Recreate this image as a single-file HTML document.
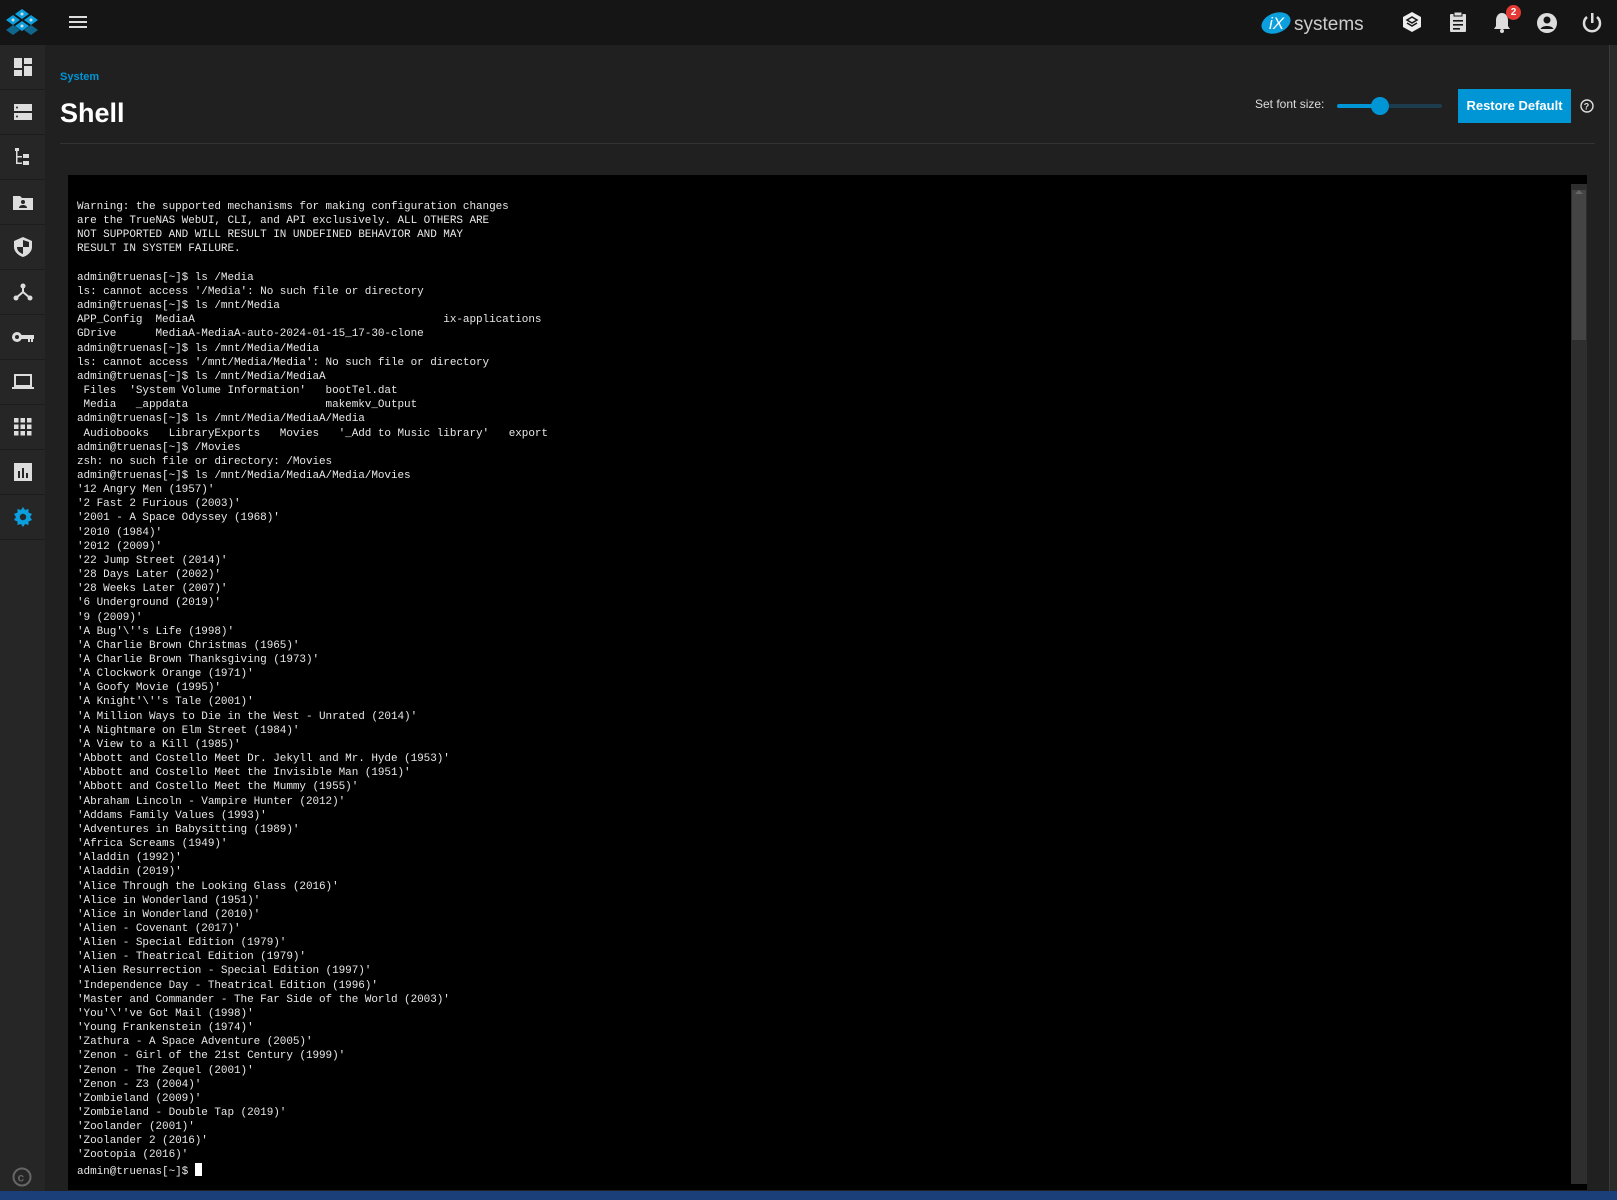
<!DOCTYPE html>
<html><head><meta charset="utf-8"><style>
*{margin:0;padding:0;box-sizing:border-box}
body{width:1617px;height:1200px;overflow:hidden;background:#202020;font-family:"Liberation Sans",sans-serif;position:relative}
.top{position:absolute;left:0;top:0;width:1617px;height:45px;background:#151515}
.side{position:absolute;left:0;top:45px;width:45px;height:1155px;background:#262626}
.side .it{height:45px;border-bottom:1px solid #1c1c1c;display:flex;align-items:center;justify-content:center}
.crumb{position:absolute;left:60px;top:71px;color:#0095d5;font-size:11px;font-weight:bold}
.title{position:absolute;left:60px;top:98px;color:#fff;font-size:27px;font-weight:bold}
.hr{position:absolute;left:60px;top:143px;width:1535px;height:1px;background:#333}
.term{position:absolute;left:68px;top:175px;width:1519px;height:1015px;background:#000}
pre{position:absolute;left:77px;top:200px;font-family:"Liberation Mono",monospace;font-size:11px;letter-spacing:-0.06px;line-height:14.16px;color:#e8e8e8}
.cur{display:inline-block;width:7px;height:13px;background:#fff;vertical-align:-2px}
.sb{position:absolute;left:1571px;top:184px;width:16px;height:1000px;background:#2e2e2e}
.thumb{position:absolute;left:1572px;top:190px;width:14px;height:150px;background:#444}
.psb{position:absolute;left:1609px;top:45px;width:8px;height:1147px;background:#2a2a2a;border-left:1px solid #3a3a3a}
.bottom{position:absolute;left:0;top:1191px;width:1617px;height:9px;background:#1b3f78}
.btn{position:absolute;left:1458px;top:89px;width:113px;height:34px;background:#0095d5;color:#fff;font-weight:bold;font-size:13px;text-align:center;line-height:34px}
</style></head><body>
<div class="top"></div>
<svg style="position:absolute;left:3px;top:8px" width="38" height="28" viewBox="0 0 38 28"><g fill="#0b9fde"><polygon points="19,1 26,6 19,11 12,6"/><polygon points="10,7 17,12 10,17 3,12"/><polygon points="28,7 35,12 28,17 21,12"/><polygon points="19,13 26,18 19,23 12,18"/><polygon points="10,17 17,22 10,27 3,22" opacity=".6"/><polygon points="28,17 35,22 28,27 21,22" opacity=".6"/></g><g fill="#ddd"><circle cx="19" cy="6" r="1.5"/><circle cx="10" cy="12" r="1.5"/><circle cx="28" cy="12" r="1.5"/><circle cx="19" cy="18" r="1.5"/></g></svg>
<svg style="position:absolute;left:69px;top:15px" width="20" height="14"><rect y="1" width="18" height="2" fill="#ddd"/><rect y="6" width="18" height="2" fill="#ddd"/><rect y="11" width="18" height="2" fill="#ddd"/></svg>
<svg style="position:absolute;left:1260px;top:8px" width="110" height="30"><ellipse cx="16" cy="15" rx="15" ry="10" fill="#0b9fde" transform="rotate(-20 16 15)"/><text x="9" y="21" fill="#fff" font-size="17" font-family="Liberation Sans" font-style="italic">iX</text><text x="34" y="22" fill="#ccc" font-size="19" font-family="Liberation Sans">systems</text></svg>
<svg style="position:absolute;left:1401px;top:11px" width="22" height="22" viewBox="0 0 22 22"><path d="M11 1 L20 6 L20 16 L11 21 L2 16 L2 6Z" fill="#eee"/><path d="M6 9 L11 6 L16 9 L11 12Z M6 12 L11 15 L16 12" fill="none" stroke="#151515" stroke-width="1.5"/></svg>
<svg style="position:absolute;left:1448px;top:11px" width="20" height="22"><rect x="2" y="3" width="16" height="18" rx="1" fill="#ddd"/><rect x="6" y="1" width="8" height="4" fill="#ddd" stroke="#151515"/><rect x="5" y="9" width="10" height="1.6" fill="#151515"/><rect x="5" y="13" width="10" height="1.6" fill="#151515"/><rect x="5" y="17" width="7" height="1.6" fill="#151515"/></svg>
<svg style="position:absolute;left:1492px;top:12px" width="20" height="22"><path d="M10 1 C6 1 4 5 4 8 L4 14 L2 17 L18 17 L16 14 L16 8 C16 5 14 1 10 1Z" fill="#ddd"/><circle cx="10" cy="19" r="2" fill="#ddd"/></svg>
<div style="position:absolute;left:1506px;top:5px;width:15px;height:15px;border-radius:50%;background:#e53935;color:#fff;font-size:10px;font-weight:bold;text-align:center;line-height:15px">2</div>
<svg style="position:absolute;left:1536px;top:12px" width="22" height="22"><circle cx="11" cy="11" r="10" fill="#ddd"/><circle cx="11" cy="8" r="3.5" fill="#151515"/><path d="M4.5 17 C6 13 16 13 17.5 17" fill="#151515"/></svg>
<svg style="position:absolute;left:1581px;top:12px" width="22" height="22"><path d="M6 5 A8 8 0 1 0 16 5" fill="none" stroke="#ddd" stroke-width="2.5"/><rect x="10" y="1" width="2.5" height="10" fill="#ddd"/></svg>
<div class="side">
<div class="it"><svg width="18" height="18"><rect x="0" y="0" width="8" height="10" fill="#ddd"/><rect x="10" y="0" width="8" height="6" fill="#ddd"/><rect x="0" y="12" width="8" height="6" fill="#ddd"/><rect x="10" y="8" width="8" height="10" fill="#ddd"/></svg></div>
<div class="it"><svg width="18" height="16"><rect y="0" width="18" height="7" fill="#ddd"/><rect y="9" width="18" height="7" fill="#ddd"/><circle cx="3" cy="3.5" r="1" fill="#262626"/><circle cx="3" cy="12.5" r="1" fill="#262626"/></svg></div>
<div class="it"><svg width="18" height="18"><rect x="1" y="0" width="4" height="3" fill="#ddd"/><rect x="2" y="3" width="1.5" height="13" fill="#ddd"/><rect x="2" y="8" width="6" height="1.5" fill="#ddd"/><rect x="2" y="14.5" width="6" height="1.5" fill="#ddd"/><rect x="9" y="6" width="6" height="4" fill="#ddd"/><rect x="9" y="13" width="6" height="4" fill="#ddd"/></svg></div>
<div class="it"><svg width="20" height="16"><path d="M0 2 L7 2 L9 4 L20 4 L20 16 L0 16Z" fill="#ddd"/><circle cx="10" cy="8" r="2" fill="#262626"/><path d="M6 14 C6 10 14 10 14 14Z" fill="#262626"/></svg></div>
<div class="it"><svg width="18" height="20"><path d="M9 0 L18 4 L18 10 C18 15 13 19 9 20 C5 19 0 15 0 10 L0 4Z" fill="#ddd"/><path d="M9 3 L9 10 L15 10 L15 5Z M9 10 L3 10 C3 14 6 16 9 17Z" fill="#262626"/></svg></div>
<div class="it"><svg width="20" height="18"><circle cx="10" cy="3" r="2.5" fill="#ddd"/><circle cx="3" cy="15" r="2.5" fill="#ddd"/><circle cx="17" cy="15" r="2.5" fill="#ddd"/><path d="M10 3 L10 9 L3 15 M10 9 L17 15" stroke="#ddd" stroke-width="2" fill="none"/></svg></div>
<div class="it"><svg width="22" height="12"><circle cx="5" cy="6" r="5" fill="#ddd"/><circle cx="5" cy="6" r="2" fill="#262626"/><rect x="9" y="4" width="13" height="4" fill="#ddd"/><rect x="16" y="8" width="2" height="3" fill="#ddd"/><rect x="19" y="8" width="2" height="3" fill="#ddd"/></svg></div>
<div class="it"><svg width="22" height="16"><rect x="3" y="1" width="16" height="11" fill="none" stroke="#ddd" stroke-width="2"/><rect x="0" y="13" width="22" height="2" fill="#ddd"/></svg></div>
<div class="it"><svg width="18" height="18" fill="#ddd"><rect x="0" y="0" width="4.5" height="4.5"/><rect x="6.5" y="0" width="4.5" height="4.5"/><rect x="13" y="0" width="4.5" height="4.5"/><rect x="0" y="6.5" width="4.5" height="4.5"/><rect x="6.5" y="6.5" width="4.5" height="4.5"/><rect x="13" y="6.5" width="4.5" height="4.5"/><rect x="0" y="13" width="4.5" height="4.5"/><rect x="6.5" y="13" width="4.5" height="4.5"/><rect x="13" y="13" width="4.5" height="4.5"/></svg></div>
<div class="it"><svg width="18" height="18"><rect width="18" height="18" fill="#ddd"/><rect x="4" y="8" width="2" height="7" fill="#262626"/><rect x="8" y="5" width="2" height="10" fill="#262626"/><rect x="12" y="10" width="2" height="5" fill="#262626"/></svg></div>
<div class="it"><svg width="20" height="20" viewBox="0 0 20 20"><path d="M10 0 L12 3 L15.5 2 L15.5 5.5 L19 7 L17 10 L19 13 L15.5 14.5 L15.5 18 L12 17 L10 20 L8 17 L4.5 18 L4.5 14.5 L1 13 L3 10 L1 7 L4.5 5.5 L4.5 2 L8 3Z" fill="#0b9fde"/><circle cx="10" cy="10" r="3.2" fill="#262626"/></svg></div>
</div>
<svg style="position:absolute;left:12px;top:1167px" width="20" height="20"><circle cx="10" cy="10" r="8.5" fill="none" stroke="#666" stroke-width="2"/><text x="5.5" y="14.5" fill="#666" font-size="12" font-weight="bold" font-family="Liberation Sans">c</text></svg>
<div class="crumb">System</div>
<div class="title">Shell</div>
<div style="position:absolute;left:1255px;top:97px;color:#ddd;font-size:12px">Set font size:</div>
<div style="position:absolute;left:1337px;top:104px;width:105px;height:4px;border-radius:2px;background:#1d3c4e"></div>
<div style="position:absolute;left:1337px;top:104px;width:43px;height:4px;border-radius:2px;background:#0095d5"></div>
<div style="position:absolute;left:1371px;top:97px;width:18px;height:18px;border-radius:50%;background:#0095d5"></div>
<div class="btn">Restore Default</div>
<svg style="position:absolute;left:1580px;top:99px" width="14" height="14"><circle cx="7" cy="7" r="6" fill="none" stroke="#ddd" stroke-width="1.4"/><text x="3.8" y="10.5" fill="#ddd" font-size="9" font-weight="bold" font-family="Liberation Sans">?</text></svg>
<div class="hr"></div>
<div class="term"></div>
<pre>Warning: the supported mechanisms for making configuration changes
are the TrueNAS WebUI, CLI, and API exclusively. ALL OTHERS ARE
NOT SUPPORTED AND WILL RESULT IN UNDEFINED BEHAVIOR AND MAY
RESULT IN SYSTEM FAILURE.

admin@truenas[~]$ ls /Media
ls: cannot access '/Media': No such file or directory
admin@truenas[~]$ ls /mnt/Media
APP_Config  MediaA                                      ix-applications
GDrive      MediaA-MediaA-auto-2024-01-15_17-30-clone
admin@truenas[~]$ ls /mnt/Media/Media
ls: cannot access '/mnt/Media/Media': No such file or directory
admin@truenas[~]$ ls /mnt/Media/MediaA
 Files  'System Volume Information'   bootTel.dat
 Media   _appdata                     makemkv_Output
admin@truenas[~]$ ls /mnt/Media/MediaA/Media
 Audiobooks   LibraryExports   Movies   '_Add to Music library'   export
admin@truenas[~]$ /Movies
zsh: no such file or directory: /Movies
admin@truenas[~]$ ls /mnt/Media/MediaA/Media/Movies
'12 Angry Men (1957)'
'2 Fast 2 Furious (2003)'
'2001 - A Space Odyssey (1968)'
'2010 (1984)'
'2012 (2009)'
'22 Jump Street (2014)'
'28 Days Later (2002)'
'28 Weeks Later (2007)'
'6 Underground (2019)'
'9 (2009)'
'A Bug'\''s Life (1998)'
'A Charlie Brown Christmas (1965)'
'A Charlie Brown Thanksgiving (1973)'
'A Clockwork Orange (1971)'
'A Goofy Movie (1995)'
'A Knight'\''s Tale (2001)'
'A Million Ways to Die in the West - Unrated (2014)'
'A Nightmare on Elm Street (1984)'
'A View to a Kill (1985)'
'Abbott and Costello Meet Dr. Jekyll and Mr. Hyde (1953)'
'Abbott and Costello Meet the Invisible Man (1951)'
'Abbott and Costello Meet the Mummy (1955)'
'Abraham Lincoln - Vampire Hunter (2012)'
'Addams Family Values (1993)'
'Adventures in Babysitting (1989)'
'Africa Screams (1949)'
'Aladdin (1992)'
'Aladdin (2019)'
'Alice Through the Looking Glass (2016)'
'Alice in Wonderland (1951)'
'Alice in Wonderland (2010)'
'Alien - Covenant (2017)'
'Alien - Special Edition (1979)'
'Alien - Theatrical Edition (1979)'
'Alien Resurrection - Special Edition (1997)'
'Independence Day - Theatrical Edition (1996)'
'Master and Commander - The Far Side of the World (2003)'
'You'\''ve Got Mail (1998)'
'Young Frankenstein (1974)'
'Zathura - A Space Adventure (2005)'
'Zenon - Girl of the 21st Century (1999)'
'Zenon - The Zequel (2001)'
'Zenon - Z3 (2004)'
'Zombieland (2009)'
'Zombieland - Double Tap (2019)'
'Zoolander (2001)'
'Zoolander 2 (2016)'
'Zootopia (2016)'
admin@truenas[~]$ <span class="cur"></span></pre>
<div class="sb"></div>
<div class="thumb"></div>
<svg style="position:absolute;left:1574px;top:189px" width="10" height="6"><path d="M1 5 L5 1 L9 5Z" fill="#666"/></svg>
<div class="psb"></div>
<div class="bottom"></div>
</body></html>
